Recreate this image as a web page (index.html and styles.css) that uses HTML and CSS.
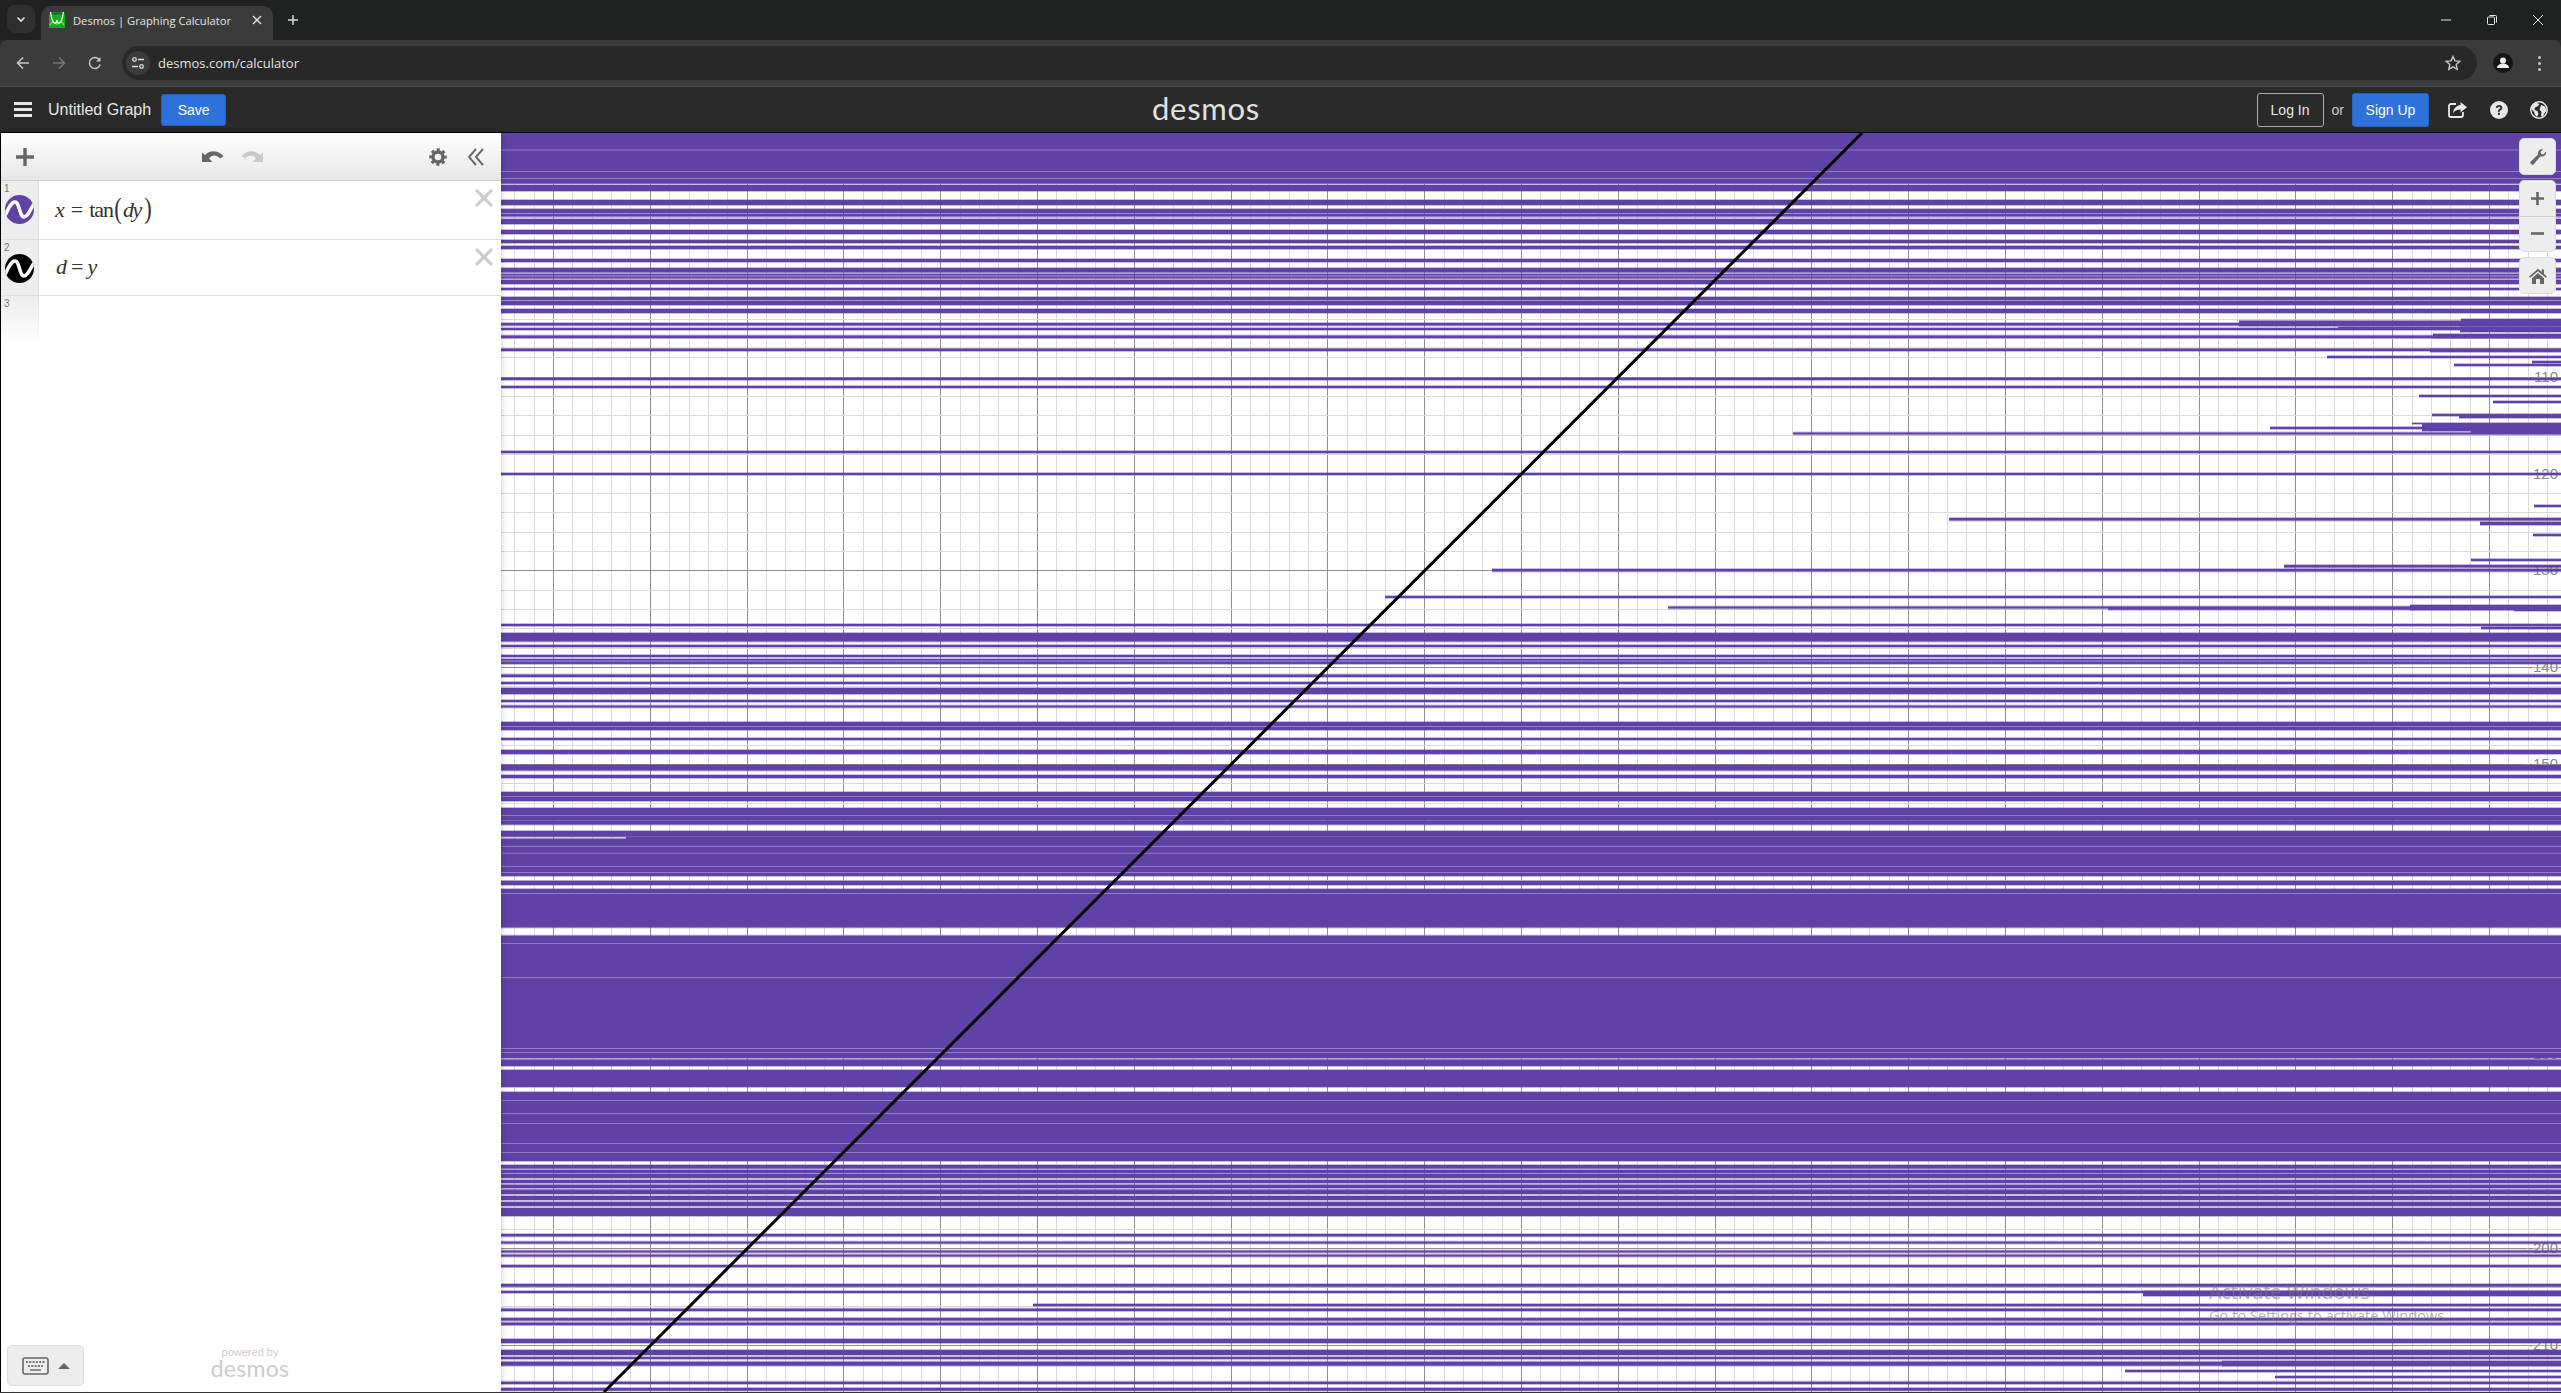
FILE: index.html
```html
<!DOCTYPE html>
<html lang="en">
  <head>
    <meta charset="UTF-8" />
    <meta name="viewport" content="width=device-width, initial-scale=1.0" />
    <title>Desmos | Graphing Calculator</title>
    <link rel="stylesheet" href="styles.css" />
  </head>
  <body>
    <div class="tabStrip">
      <div class="tabMenu">
        <svg width="12" height="12" viewBox="0 0 12 12"><path d="M2.5 4.5 6 8l3.5-3.5" fill="none" stroke="#e3e3e3" stroke-width="1.6" /></svg>
      </div>
      <div class="tab">
        <svg class="favicon" width="16" height="16" viewBox="0 0 16 16">
          <rect width="16" height="16" fill="#12b312" />
          <rect width="16" height="3" y="0" fill="#0b7d2a" />
          <path d="M1.5 0C2.5 7 4.5 11.5 6 11.5 7.5 11.5 8 8 8 8s.5 3.5 2 3.5 3.5-4.5 4.5-11.5" fill="none" stroke="#fff" stroke-width="1.2" />
          <path d="M1 13C3 9 5 9 8 12.500 11 9 13 9 15 13" fill="none" stroke="#d8f5d8" stroke-width=".8" />
        </svg>
        <span class="tabTitle">Desmos | Graphing Calculator</span>
        <svg class="tabClose" width="10" height="10" viewBox="0 0 10 10"><path d="M1 1l8 8M9 1l-8 8" stroke="#e3e3e3" stroke-width="1.400" /></svg>
      </div>
      <svg class="newTab" width="12" height="12" viewBox="0 0 12 12"><path d="M6 1v10M1 6h10" stroke="#d8d8d8" stroke-width="1.500" /></svg>
      <div class="windowControls">
        <svg width="12" height="12" viewBox="0 0 12 12"><path d="M1 6h10" stroke="#e3e3e3" stroke-width="1" /></svg>
        <svg width="12" height="12" viewBox="0 0 12 12"><rect x="1.500" y="3" width="7" height="7.500" rx="1" fill="none" stroke="#e3e3e3" /><path d="M3.500 1.500h6a1 1 0 0 1 1 1v6" fill="none" stroke="#e3e3e3" /></svg>
        <svg width="12" height="12" viewBox="0 0 12 12"><path d="M1 1l10 10M11 1 1 11" stroke="#e3e3e3" stroke-width="1" /></svg>
      </div>
    </div>

    <div class="toolbar">
      <div class="navIcons">
        <svg width="14" height="14" viewBox="0 0 14 14"><path d="M13 7H2M7 1.500 1.500 7 7 12.500" fill="none" stroke="#c7c7c7" stroke-width="1.600" /></svg>
        <svg width="14" height="14" viewBox="0 0 14 14"><path d="M1 7h11M7 1.500 12.500 7 7 12.500" fill="none" stroke="#777" stroke-width="1.600" /></svg>
        <svg width="14" height="14" viewBox="0 0 14 14"><path d="M12.200 8.500A5.500 5.500 0 1 1 11 3.200" fill="none" stroke="#c7c7c7" stroke-width="1.500" /><path d="M12.500 1v4.500H8z" fill="#c7c7c7" /></svg>
      </div>
      <div class="addressBar">
        <div class="siteInfo">
          <svg width="14" height="14" viewBox="0 0 14 14" fill="none" stroke="#dcdcdc" stroke-width="1.300">
            <circle cx="3.500" cy="3.500" r="1.800" /><path d="M7 3.500h6M1 10.500h6" /><circle cx="10.500" cy="10.500" r="1.800" />
          </svg>
        </div>
        <span class="url">desmos.com/calculator</span>
        <svg class="star" width="16" height="16" viewBox="0 0 16 16"><path d="M8 1.500l2 4.400 4.700.5-3.500 3.200 1 4.700L8 11.900l-4.200 2.400 1-4.700-3.500-3.200 4.700-.5z" fill="none" stroke="#c7c7c7" stroke-width="1.400" /></svg>
      </div>
      <div class="profile">
        <svg width="20" height="20" viewBox="0 0 20 20"><circle cx="10" cy="10" r="10" fill="#151515" /><circle cx="10" cy="7.500" r="3" fill="#eee" /><path d="M4 15c0-3 3-4.500 6-4.500s6 1.500 6 4.500z" fill="#eee" /></svg>
      </div>
      <div class="kebab"><i></i><i></i><i></i></div>
    </div>

    <header class="appBar">
      <div class="appLeft">
        <div class="burger"><i></i><i></i><i></i></div>
        <span class="graphTitle">Untitled Graph</span>
        <button class="saveBtn">Save</button>
      </div>
      <div class="logo">desmos</div>
      <div class="appRight">
        <button class="loginBtn">Log In</button>
        <span class="orText">or</span>
        <button class="signupBtn">Sign Up</button>
        <svg class="shareIcon" width="20" height="18" viewBox="0 0 20 18">
          <path d="M8 3H3a2 2 0 0 0-2 2v9a2 2 0 0 0 2 2h10a2 2 0 0 0 2-2v-3" fill="none" stroke="#e8e8e8" stroke-width="1.800" />
          <path d="M12.500 1 19 6.300l-6.500 5.200V8.500C9 8.500 6.500 9.500 5 12.500 5.300 8 8 4.500 12.500 4z" fill="#e8e8e8" />
        </svg>
        <svg class="helpIcon" width="18" height="18" viewBox="0 0 18 18">
          <circle cx="9" cy="9" r="9" fill="#e8e8e8" />
          <path d="M5.800 6.800C6 4.800 7.400 4 9.100 4c1.800 0 3.200 1 3.200 2.700 0 2.300-2.500 2.300-2.500 4.100H7.900c0-2.800 2.300-2.700 2.300-4 0-.7-.5-1.100-1.200-1.100-.8 0-1.200.5-1.300 1.300z" fill="#2a2a2a" />
          <rect x="7.900" y="11.800" width="2" height="2" fill="#2a2a2a" />
        </svg>
        <svg class="globeIcon" width="18" height="18" viewBox="0 0 18 18">
          <circle cx="9" cy="9" r="8.200" fill="#2a2a2a" stroke="#e8e8e8" stroke-width="1.500" />
          <path d="M6 1.500 9.500 3 8 5 5 6.500 4.500 9 7.500 10 8.500 13 7 16 5 14 4 11 1.500 8C2 5 3.500 3 6 1.500zM11 4l4 1.500 1.500 4-2 3-2 3.500-1.500-1 .5-4-2-2.500 1-2.500z" fill="#e8e8e8" />
        </svg>
      </div>
    </header>

    <main class="calculator">
      <aside class="expressionPanel">
        <div class="panelTop">
          <svg class="addIcon" width="18" height="18" viewBox="0 0 18 18"><path d="M9 0v18M0 9h18" stroke="#666" stroke-width="3.400" /></svg>
          <div class="undoGroup">
            <svg width="22" height="14" viewBox="0 0 22 14"><path d="M0 13V3.500L3 6C7 2 14 0 21.500 7L18.500 9.500C14 5.500 10 5.500 7 9.500L10.500 13Z" fill="#666" /></svg>
            <svg width="22" height="14" viewBox="0 0 22 14"><path d="M22 13V3.500L19 6C15 2 8 0 .5 7L3.500 9.500C8 5.500 12 5.500 15 9.500L11.500 13Z" fill="#c8c8c8" /></svg>
          </div>
          <div class="panelRightIcons">
            <svg width="18" height="18" viewBox="0 0 18 18" fill="none" stroke="#666">
              <circle cx="9" cy="9" r="5" stroke-width="3.400" />
              <circle cx="9" cy="9" r="7.200" stroke-width="3.200" stroke-dasharray="3 2.655" stroke-dashoffset="1.500" />
            </svg>
            <svg width="18" height="18" viewBox="0 0 18 18" fill="none" stroke="#666" stroke-width="1.900"><path d="M9 1 2 9l7 8M16 1 9 9l7 8" /></svg>
          </div>
        </div>

        <div class="expr">
          <div class="gutter">
            <span class="rowNum">1</span>
            <svg class="waveIcon" width="29" height="29" viewBox="0 0 29 29">
              <defs><clipPath id="disc"><circle cx="14.500" cy="14.500" r="14.500" /></clipPath></defs>
              <circle cx="14.500" cy="14.500" r="14.500" fill="#6042a6" />
              <path clip-path="url(#disc)" d="M-1 23C3 14 6 7 10 7c4.500 0 4.500 15 9 15 3.500 0 6-7 10-13" fill="none" stroke="#fff" stroke-width="3.500" />
            </svg>
          </div>
          <div class="mathLine"><i>x</i><span class="eq">=</span><span class="fnName">tan</span><span class="paren">(</span><i class="tight">dy</i><span class="paren">)</span></div>
          <svg class="removeIcon" width="18" height="18" viewBox="0 0 18 18"><path d="M1 1l16 16M17 1 1 17" stroke="#ccc" stroke-width="3.200" /></svg>
        </div>
        <div class="expr exprSecond">
          <div class="gutter">
            <span class="rowNum">2</span>
            <svg class="waveIcon" width="29" height="29" viewBox="0 0 29 29">
              <circle cx="14.500" cy="14.500" r="14.500" fill="#000" />
              <path clip-path="url(#disc)" d="M-1 23C3 14 6 7 10 7c4.500 0 4.500 15 9 15 3.500 0 6-7 10-13" fill="none" stroke="#fff" stroke-width="3.500" />
            </svg>
          </div>
          <div class="mathLine mathSecond"><i>d</i><span class="eq">=</span><i>y</i></div>
          <svg class="removeIcon" width="18" height="18" viewBox="0 0 18 18"><path d="M1 1l16 16M17 1 1 17" stroke="#ccc" stroke-width="3.200" /></svg>
        </div>
        <div class="exprEmpty">
          <div class="gutterFade"><span class="rowNum">3</span></div>
        </div>

        <div class="panelBottom">
          <div class="keypadToggle">
            <svg width="27" height="18" viewBox="0 0 27 18" fill="none">
              <rect x="1" y="1" width="25" height="16" rx="2" stroke="#666" stroke-width="1.600" />
              <path d="M4 5h19M6 9h15" stroke="#777" stroke-width="1.800" stroke-dasharray="2 1.300" />
              <path d="M8 13h11" stroke="#777" stroke-width="1.600" />
            </svg>
            <i class="caretUp"></i>
          </div>
          <div class="poweredBy">
            <span>powered by</span>
            <span class="poweredLogo">desmos</span>
          </div>
        </div>
      </aside>

      <section class="graphPaper">
        <svg id="graph" viewBox="501 133 2060 1259" preserveAspectRatio="none"></svg>
        <div class="graphTools">
          <div class="toolBox">
            <svg width="18" height="18" viewBox="0 0 18 18"><path d="M17 3.500c.6 2.500-1 5-3.800 5-.6 0-1.100-.1-1.600-.3L4.400 16.500c-1.200 1.200-4.100-1.400-2.900-2.700l7.500-7.400C8.300 3.500 10.700.6 14 1.100l-2.500 3 .7 2 2 .5z" fill="#666" /></svg>
          </div>
          <div class="toolBox zoomBox">
            <div class="zoomBtn"><svg width="15" height="15" viewBox="0 0 15 15"><path d="M7.500 1v13M1 7.500h13" stroke="#666" stroke-width="2.600" /></svg></div>
            <div class="zoomBtn"><svg width="15" height="15" viewBox="0 0 15 15"><path d="M1 7.500h13" stroke="#666" stroke-width="2.600" /></svg></div>
          </div>
          <div class="toolBox">
            <svg width="18" height="16" viewBox="0 0 18 16"><path d="M9 .8 0 8.500l1.200 1.300L9 3.300l7.800 6.500L18 8.500l-3-2.600V1.500h-2.200v2.500zM3 10.200 9 5l6 5.200V16h-4v-5H7v5H3z" fill="#666" /></svg>
          </div>
        </div>
        <div class="activateNote">
          <div class="activateTitle">Activate Windows</div>
          <div class="activateSub">Go to Settings to activate Windows.</div>
        </div>
      </section>
    </main>

    <script src="graph.js"></script>
  </body>
</html>
```
FILE: styles.css
```css
* {
  box-sizing: border-box;
}

body {
  margin: 0;
  height: 1393px;
  overflow: hidden;
  display: flex;
  flex-direction: column;
  font-family: "Liberation Sans", Arial, sans-serif;
  background-color: #2a2a2a;
  border-bottom: 1px solid #333;
}

button {
  font-family: inherit;
  cursor: pointer;
}

/* browser chrome */
.tabStrip {
  height: 40px;
  flex: none;
  display: flex;
  align-items: flex-end;
  background-color: #202221;
  position: relative;
}

.tabMenu {
  width: 28px;
  height: 28px;
  margin: 0 6px 7px 7px;
  border-radius: 8px;
  background-color: #2e2f2e;
  display: flex;
  align-items: center;
  justify-content: center;
}

.tab {
  width: 232px;
  height: 34px;
  padding: 0 11px 6px 8px;
  border-radius: 10px 10px 0 0;
  background-color: #3b3b3b;
  display: flex;
  align-items: center;
}

.tabTitle {
  margin-left: 8px;
  font-family: "Open Sans", sans-serif;
  font-size: 11.2px;
  color: #e3e3e3;
  flex: 1;
}

.newTab {
  margin: 0 0 14px 14px;
}

.windowControls {
  margin-left: auto;
  padding-right: 17px;
  margin-bottom: 14px;
  display: flex;
  gap: 34px;
}

.toolbar {
  height: 47px;
  flex: none;
  display: flex;
  align-items: flex-start;
  padding-top: 6px;
  background-color: #3b3b3b;
  border-bottom: 1px solid #4a4a4a;
  border-radius: 8px 8px 0 0;
}

.navIcons {
  width: 122px;
  height: 34px;
  padding-left: 16px;
  display: flex;
  align-items: center;
  gap: 22px;
}

.addressBar {
  width: 2355px;
  height: 34px;
  border-radius: 17px;
  background-color: #282828;
  display: flex;
  align-items: center;
  padding: 0 16px 0 4px;
}

.siteInfo {
  width: 24px;
  height: 24px;
  border-radius: 12px;
  background-color: #3b3b3b;
  display: flex;
  align-items: center;
  justify-content: center;
}

.url {
  margin-left: 8px;
  font-family: "Open Sans", sans-serif;
  font-size: 13px;
  color: #e3e3e3;
}

.star {
  margin-left: auto;
}

.profile {
  margin-left: 16px;
  height: 34px;
  display: flex;
  align-items: center;
}

.kebab {
  margin-left: 25px;
  height: 34px;
  display: flex;
  flex-direction: column;
  justify-content: center;
  gap: 3px;
}

.kebab i {
  display: block;
  width: 3px;
  height: 3px;
  border-radius: 50%;
  background-color: #c7c7c7;
}

/* desmos header */
.appBar {
  height: 46px;
  flex: none;
  position: relative;
  display: flex;
  align-items: center;
  justify-content: space-between;
  padding-left: 14px;
  background-color: #2a2a2a;
  border-bottom: 1px solid #000;
}

.appLeft,
.appRight {
  display: flex;
  align-items: center;
}

.burger {
  width: 18px;
  display: flex;
  flex-direction: column;
  gap: 3px;
}

.burger i {
  display: block;
  height: 3px;
  background-color: #e8e8e8;
}

.graphTitle {
  margin-left: 16px;
  font-size: 16px;
  color: #e6e6e6;
}

.saveBtn {
  margin-left: 10px;
  width: 65px;
  height: 32px;
  border: 1px solid #2a62ba;
  border-radius: 3px;
  background-color: #2f72dc;
  color: #fff;
  font-size: 14px;
}

.logo {
  position: absolute;
  left: 1152px;
  top: 2px;
  font-family: "Lato", sans-serif;
  font-size: 31px;
  letter-spacing: 0.7px;
  color: #e0e0e0;
}

.appRight {
  padding-right: 13px;
}

.loginBtn {
  width: 67px;
  height: 34px;
  border: 1px solid #aaa;
  border-radius: 3px;
  background: none;
  color: #e8e8e8;
  font-size: 14px;
}

.orText {
  margin: 0 8px;
  font-size: 14px;
  color: #ccc;
}

.signupBtn {
  width: 77px;
  height: 34px;
  border: 1px solid #2a62ba;
  border-radius: 3px;
  background-color: #2f72dc;
  color: #fff;
  font-size: 14px;
}

.shareIcon {
  margin-left: 19px;
}

.helpIcon {
  margin-left: 22px;
}

.globeIcon {
  margin-left: 22px;
}

/* main area */
.calculator {
  flex: 1;
  min-height: 0;
  display: flex;
}

.expressionPanel {
  width: 501px;
  flex: none;
  position: relative;
  z-index: 2;
  display: flex;
  flex-direction: column;
  background-color: #fff;
  border-left: 1px solid #000;
  box-shadow: 0 0 6px rgba(0, 0, 0, 0.25);
}

.panelTop {
  height: 48px;
  flex: none;
  padding: 0 16px 0 15px;
  display: flex;
  align-items: center;
  background: linear-gradient(#fff, #e6e6e6);
  border-bottom: 1px solid #ccc;
  position: relative;
}

.undoGroup {
  position: absolute;
  left: 201px;
  top: 16px;
  display: flex;
  gap: 17px;
}

.panelRightIcons {
  margin-left: auto;
  display: flex;
  align-items: center;
  gap: 20px;
}

.expr {
  height: 59px;
  flex: none;
  display: flex;
  position: relative;
  border-bottom: 1px solid #ddd;
}

.exprSecond {
  height: 56px;
}

.gutter {
  width: 38px;
  flex: none;
  position: relative;
  border-right: 1px solid #ddd;
  background: #ededed;
}

.rowNum {
  position: absolute;
  left: 3px;
  top: 2px;
  font-size: 10px;
  color: #777;
}

.waveIcon {
  position: absolute;
  left: 4px;
  top: 14px;
}

.mathLine {
  padding-left: 16px;
  display: flex;
  align-items: center;
  font-family: "Liberation Serif", serif;
  font-size: 22px;
  color: #333;
}

.mathSecond {
  padding-left: 17px;
  padding-bottom: 2px;
}

.eq {
  margin: 0 6px;
}

.mathSecond .eq {
  margin: 0 4px;
}

.fnName {
  letter-spacing: -1px;
}

.paren {
  font-size: 30px;
  line-height: 1;
  position: relative;
  top: -2px;
  transform: scaleX(0.75);
}

.tight {
  letter-spacing: -1.5px;
  padding-right: 2px;
}

.removeIcon {
  position: absolute;
  right: 8px;
  top: 8px;
}

.exprEmpty {
  flex: none;
  height: 48px;
  display: flex;
}

.gutterFade {
  width: 38px;
  position: relative;
  background: linear-gradient(#ededed, #fff);
  border-right: 1px solid #ddd;
  border-image: linear-gradient(#ddd, #fff) 1;
}

.panelBottom {
  margin-top: auto;
  height: 48px;
  flex: none;
  position: relative;
}

.keypadToggle {
  position: absolute;
  left: 6px;
  top: 1px;
  width: 77px;
  height: 41px;
  border: 1px solid #ddd;
  border-radius: 5px;
  background-color: #ededed;
  display: flex;
  align-items: center;
  padding-left: 14px;
  gap: 9px;
}

.caretUp {
  width: 0;
  height: 0;
  border-left: 6px solid transparent;
  border-right: 6px solid transparent;
  border-bottom: 6px solid #666;
}

.poweredBy {
  position: absolute;
  left: 209px;
  top: 2px;
  width: 80px;
  display: flex;
  flex-direction: column;
  align-items: center;
  font-size: 11px;
  color: #ccc;
}

.poweredLogo {
  margin-top: -4px;
  font-family: "Lato", sans-serif;
  font-size: 23px;
  letter-spacing: 0.3px;
}

/* graph */
.graphPaper {
  flex: 1;
  min-width: 0;
  position: relative;
  background-color: #fff;
}

#graph {
  display: block;
  width: 100%;
  height: 100%;
}

.graphTools {
  position: absolute;
  top: 5px;
  right: 5px;
  width: 37px;
  display: flex;
  flex-direction: column;
  gap: 5px;
}

.toolBox {
  height: 37px;
  border: 1px solid #ddd;
  border-radius: 5px;
  background-color: #ededed;
  display: flex;
  align-items: center;
  justify-content: center;
}

.zoomBox {
  height: 72px;
  flex-direction: column;
}

.zoomBtn {
  flex: 1;
  width: 100%;
  display: flex;
  align-items: center;
  justify-content: center;
}

.zoomBtn + .zoomBtn {
  border-top: 1px solid #ccc;
}

.activateNote {
  position: absolute;
  left: 1708px;
  top: 1146px;
  font-family: "Open Sans", sans-serif;
  color: rgba(120, 120, 120, 0.6);
}

.activateTitle {
  font-size: 19.6px;
  line-height: 25px;
}

.activateSub {
  font-size: 14.6px;
  line-height: 22px;
}

.graphLabel {
  font-family: "Liberation Sans", Arial, sans-serif;
  font-size: 15px;
  fill: #888;
  stroke: rgba(255, 255, 255, 0.4);
  stroke-width: 3px;
  paint-order: stroke;
  text-anchor: end;
}
```
FILE: graph.js
```js
// the graph is drawn from measured data, all numbers are page pixels
const NS = "http://www.w3.org/2000/svg";
const svg = document.getElementById("graph");
const PURPLE = "#6042a6";

function add(tag, attrs) {
  const el = document.createElementNS(NS, tag);
  for (const k in attrs) el.setAttribute(k, attrs[k]);
  svg.appendChild(el);
  return el;
}

function gridLine(x1, y1, x2, y2, color) {
  add("line", { x1, y1, x2, y2, stroke: color, "stroke-width": 1, "shape-rendering": "crispEdges" });
}

// grid
const STEP = 96.8;
for (let k = -3; k <= 105; k++) {
  const x = 553 + (k * STEP) / 5;
  const major = k % 5 === 0;
  if (x > 501) gridLine(Math.round(x) + 0.5, 133, Math.round(x) + 0.5, 1392, major ? "#8f8f8f" : "#dadada");
}
for (let k = -10; k <= 55; k++) {
  const y = 376.7 + (k * STEP) / 5;
  const major = k % 5 === 0;
  if (y > 133) gridLine(501, Math.round(y) + 0.5, 2561, Math.round(y) + 0.5, major ? "#8f8f8f" : "#dadada");
}

// axis numbers
for (let v = 110; v <= 210; v += 10) {
  const y = 376.7 + (v - 110) * 9.68;
  const t = add("text", { x: 2558, y: y + 5, class: "graphLabel" });
  t.textContent = "-" + v;
}

// [top, bottom, startX] of each band of the implicit curve
const bands = [
  [133, 183], [185, 191], [200, 205], [209, 213], [214, 217], [219, 224], [230, 234],
  [240, 243], [246, 249], [259, 262], [268, 272.5], [274, 275.5], [276.5, 278.5], [280, 284],
  [288, 290], [297, 300], [301, 305],
  [309, 313], [323, 325.5], [328, 330], [335.5, 338], [348.5, 351], [378, 380], [386, 388],
  [451, 453], [473, 475], [624, 626], [633, 641.5], [645, 647], [655, 657], [659, 660.6],
  [661.5, 664], [674.5, 677], [682, 684], [688, 694], [700, 702], [705.5, 707.5], [722, 730],
  [738, 740], [750, 754], [765, 770.5], [775, 778], [792, 801], [808, 820.5], [821, 824.6],
  [831, 836.7], [838.7, 876], [881, 885], [889, 927.5], [935.6, 1058], [1059.5, 1066],
  [1070, 1087], [1092, 1161], [1165, 1168.6], [1170, 1173], [1174, 1178], [1180, 1183],
  [1184.7, 1188], [1189.6, 1194], [1196, 1200], [1202, 1206], [1208, 1216], [1234, 1236.4],
  [1241.6, 1243.6], [1250.5, 1252.5], [1254.6, 1256.6], [1265, 1267], [1284, 1286.7],
  [1291, 1293], [1308.6, 1311], [1318, 1320.6], [1322.6, 1325], [1339, 1343], [1350, 1355],
  [1357, 1359], [1361.7, 1365.7], [1381.7, 1384], [1388, 1390.7],
  // bands that only start part way across
  [320.7, 326, 2239], [319, 326, 2461], [327, 328, 2338], [327, 332, 2460], [334, 338, 2433],
  [349, 352, 2430], [356, 358, 2327], [361, 363, 2532], [364, 366, 2454], [395, 397, 2419],
  [401, 403, 2493], [414, 416, 2432], [415, 418, 2459], [423, 424, 2412], [424, 431, 2422],
  [427, 429, 2270], [431, 433, 2471], [432.5, 434.5, 1793], [505, 507, 2534], [518, 520.5, 1949],
  [522, 525, 2480], [534, 536, 2533], [559, 561, 2471], [565, 567.5, 2284], [569, 571.5, 1492],
  [596, 598, 1385], [606.5, 608.5, 1668], [607.5, 609.7, 2108], [605, 610, 2410], [608, 611, 2514],
  [627, 629, 2481], [837, 839, 626], [1291, 1296, 2143], [1304, 1306, 1033], [1370, 1372, 2125],
  [1376, 1378, 2275], [1361, 1366, 2222],
];

for (const [top, bottom, start = 501] of bands) {
  // soft edge first, the curve is antialiased
  add("rect", { x: start, y: top - 1, width: 2561 - start, height: bottom - top + 2, fill: PURPLE, "fill-opacity": 0.35 });
  add("rect", { x: start, y: top, width: 2561 - start, height: bottom - top, fill: PURPLE });
}

// thin lighter seams inside the solid masses
const seams = [
  149.5, 171, 178, 216, 726, 796, 815, 846, 852.7, 866, 872, 893,
  943, 977, 1048, 1052, 1100, 1113, 1123, 1143, 1152,
];
for (const y of seams) {
  add("rect", { x: 501, y, width: 2060, height: 1, fill: "#fff", "fill-opacity": 0.32 });
}

// x = y line
add("line", { x1: 1862, y1: 133, x2: 604, y2: 1392, stroke: "#000", "stroke-width": 3 });
```
